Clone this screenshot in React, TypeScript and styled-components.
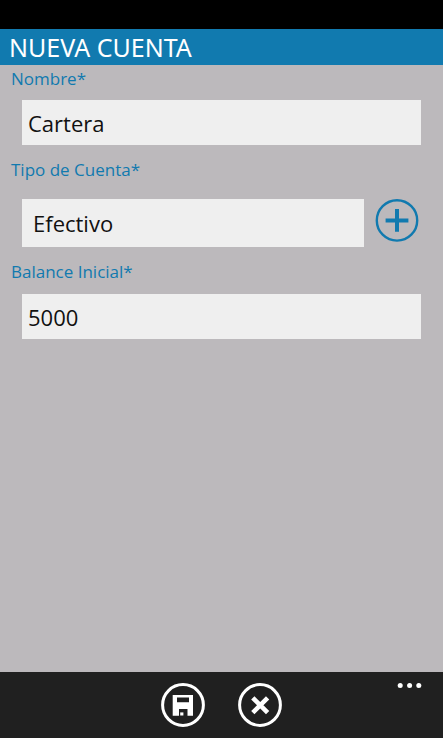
import React, { useState } from "react";
import styled, { createGlobalStyle } from "styled-components";

const GlobalStyle = createGlobalStyle`
  * { box-sizing: border-box; }
  body {
    margin: 0;
    background: #bcb9bc;
    font-family: "Open Sans", "Noto Sans", sans-serif;
  }
`;

const accent = "#117aaf";

const Page = styled.div`
  min-height: 100vh;
  display: flex;
  flex-direction: column;
  background: #bcb9bc;
`;

const StatusBar = styled.div`
  height: 29px;
  background: #000;
`;

const Header = styled.header`
  height: 36px;
  padding: 0 9px;
  display: flex;
  align-items: center;
  background: ${accent};
`;

const Title = styled.h1`
  margin: 0;
  color: #fff;
  font-family: "Noto Sans", sans-serif;
  font-size: 25px;
  line-height: 36px;
  font-weight: 400;
`;

const Form = styled.form`
  flex: 1;
  display: flex;
  flex-direction: column;
  gap: 13px;
  padding: 2px 0 13px 11px;
`;

const Field = styled.div<{ $gap: number }>`
  display: flex;
  flex-direction: column;
  gap: ${(p) => p.$gap}px;
`;

const Label = styled.label`
  color: ${accent};
  font-size: 17px;
  line-height: 24px;
`;

const Row = styled.div<{ $end?: number }>`
  display: flex;
  gap: 11px;
  padding: 0 ${(p) => p.$end ?? 22}px 0 11px;
`;

const TextInput = styled.input`
  flex: 1;
  min-width: 0;
  height: 45px;
  padding: 0 6px;
  border: 0;
  border-radius: 0;
  background: #efefef;
  color: #111;
  font: 400 22px "Open Sans", "Noto Sans", sans-serif;
`;

const Select = styled.select`
  flex: 1;
  min-width: 0;
  height: 48px;
  padding: 0 11px;
  border: 0;
  border-radius: 0;
  appearance: none;
  background: #efefef;
  color: #111;
  font: 400 22px "Open Sans", "Noto Sans", sans-serif;
`;

const IconButton = styled.button<{ $color: string }>`
  flex: none;
  width: 44px;
  height: 44px;
  padding: 0;
  border: 0;
  background: none;
  color: ${(p) => p.$color};
  cursor: pointer;

  svg { display: block; }
`;

const AppBar = styled.footer`
  height: 66px;
  display: grid;
  grid-template-columns: 1fr auto 1fr;
  align-items: start;
  padding-top: 11px;
  background: #202020;
`;

const Actions = styled.div`
  grid-column: 2;
  display: flex;
  gap: 33px;
`;

const MoreButton = styled.button`
  justify-self: end;
  margin-right: 20px;
  padding: 0;
  border: 0;
  background: none;
  color: #fff;
  cursor: pointer;

  svg { display: block; }
`;

function PlusIcon() {
  return (
    <svg width="44" height="44" viewBox="0 0 44 44" fill="none" stroke="currentColor">
      <circle cx="22" cy="21.4" r="20.2" strokeWidth="2.4" />
      <path d="M22 10v22.8M10.6 21.4h22.8" strokeWidth="4" />
    </svg>
  );
}

function SaveIcon() {
  return (
    <svg width="44" height="44" viewBox="0 0 44 44">
      <circle cx="22" cy="22" r="20.4" fill="none" stroke="currentColor" strokeWidth="3" />
      <path
        fill="currentColor"
        fillRule="evenodd"
        d="M11.7 12H32V32.7H11.7zM16 14.4v4.8h12v-4.8zM18 26v6.7h8.5V26z"
      />
      <path fill="currentColor" d="M19.2 29.4h3.2v3.1h-3.2z" />
    </svg>
  );
}

function CloseIcon() {
  return (
    <svg width="44" height="44" viewBox="0 0 44 44" fill="none" stroke="currentColor">
      <circle cx="22" cy="22" r="20.4" strokeWidth="3" />
      <path d="M14.8 14.9l14.8 14.8M29.6 14.9L14.8 29.7" strokeWidth="4.6" />
    </svg>
  );
}

export default function App() {
  const [name, setName] = useState("Cartera");
  const [balance, setBalance] = useState("5000");

  return (
    <Page>
      <GlobalStyle />
      <StatusBar />
      <Header>
        <Title>NUEVA CUENTA</Title>
      </Header>
      <Form id="account" onSubmit={(e) => e.preventDefault()}>
        <Field $gap={9}>
          <Label htmlFor="name">Nombre*</Label>
          <Row>
            <TextInput id="name" value={name} onChange={(e) => setName(e.target.value)} />
          </Row>
        </Field>
        <Field $gap={17}>
          <Label htmlFor="type">Tipo de Cuenta*</Label>
          <Row $end={24}>
            <Select id="type" defaultValue="Efectivo">
              <option>Efectivo</option>
            </Select>
            <IconButton type="button" $color={accent} aria-label="Agregar tipo de cuenta">
              <PlusIcon />
            </IconButton>
          </Row>
        </Field>
        <Field $gap={10}>
          <Label htmlFor="balance">Balance Inicial*</Label>
          <Row>
            <TextInput
              id="balance"
              inputMode="decimal"
              value={balance}
              onChange={(e) => setBalance(e.target.value)}
            />
          </Row>
        </Field>
      </Form>
      <AppBar>
        <Actions>
          <IconButton type="submit" form="account" $color="#fff" aria-label="Guardar">
            <SaveIcon />
          </IconButton>
          <IconButton type="button" $color="#fff" aria-label="Cancelar">
            <CloseIcon />
          </IconButton>
        </Actions>
        <MoreButton type="button" aria-label="Más opciones">
          <svg width="26" height="5" viewBox="0 0 26 5" fill="currentColor">
            <circle cx="3.2" cy="2.5" r="2.5" />
            <circle cx="12.6" cy="2.5" r="2.5" />
            <circle cx="21.8" cy="2.5" r="2.5" />
          </svg>
        </MoreButton>
      </AppBar>
    </Page>
  );
}
